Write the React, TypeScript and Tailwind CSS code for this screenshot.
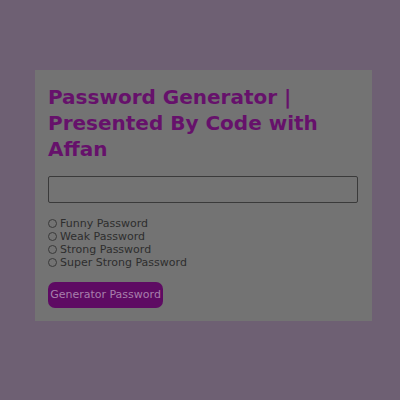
import React from "react";

const options = [
  "Funny Password",
  "Weak Password",
  "Strong Password",
  "Super Strong Password",
];

export default function App() {
  return (
    <div
      className="min-h-[400px] w-full bg-[#6e6073] pl-[35px] pt-[70px]"
      style={{ fontFamily: "'DejaVu Sans', 'Noto Sans', sans-serif" }}
    >
      <div className="h-[251px] w-[337px] bg-[#737373] px-[13px] pt-[14px]">
        <h1 className="text-[20px] font-bold leading-[26px] text-[#66116b]">
          Password Generator | Presented By Code with Affan
        </h1>
        <input
          type="text"
          className="mt-[14px] block h-[27px] w-[310px] rounded-[2px] border border-[#3a3a3a] bg-transparent"
        />
        <div className="mt-[14px] flex flex-col">
          {options.map((label) => (
            <label
              key={label}
              className="flex h-[13px] items-center gap-[3px] text-[11px] leading-[13px] text-[#2e2e2e]"
            >
              <span className="h-[9px] w-[9px] rounded-full border border-[#3a3a3a]" />
              {label}
            </label>
          ))}
        </div>
        <button className="mt-[13px] h-[26px] w-[115px] rounded-[7px] bg-[#5e0b63] text-[11px] text-[#a77fab]">
          Generator Password
        </button>
      </div>
    </div>
  );
}
